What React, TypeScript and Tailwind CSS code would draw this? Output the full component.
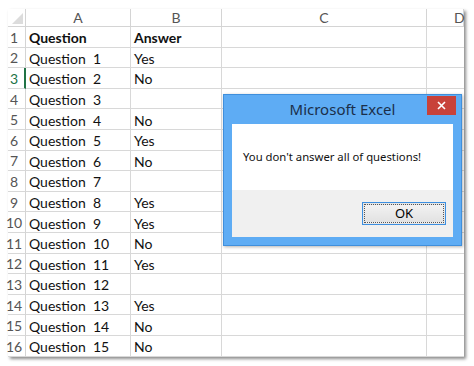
import React from 'react';

const rows: [string, string][] = [
	["Question", "Answer"],
	["Question  1", "Yes"],
	["Question  2", "No"],
	["Question  3", ""],
	["Question  4", "No"],
	["Question  5", "Yes"],
	["Question  6", "No"],
	["Question  7", ""],
	["Question  8", "Yes"],
	["Question  9", "Yes"],
	["Question  10", "No"],
	["Question  11", "Yes"],
	["Question  12", ""],
	["Question  13", "Yes"],
	["Question  14", "No"],
	["Question  15", "No"],
];

const cols = ["A", "B", "C", "D"];

const App: React.FC = () => {
	return (
		<div className="relative w-[474px] h-[366px] bg-white overflow-hidden font-['Lato',sans-serif]">
			<div className="ml-[8px] mt-[9px] w-[456px] bg-white shadow-[2px_2px_3px_rgba(0,0,0,0.45)]">
				<div className="grid grid-cols-[18px_105px_91px_205px_37px]">
					{/* header row */}
					<div className="relative h-[18px] border-r border-b border-[#d4d4d4]">
						<div className="absolute right-[2px] bottom-[2px] w-0 h-0 border-l-[11px] border-l-transparent border-b-[11px] border-b-[#dcdcdc]" />
					</div>
					{cols.map((c) => (
						<div key={c} className="h-[18px] flex items-center justify-center border-r border-b border-[#d4d4d4] text-[14px] text-[#555] whitespace-pre">
							{c === "D" ? "        D" : c}
						</div>
					))}

					{rows.map(([q, a], i) => (
						<React.Fragment key={i}>
							<div className={`h-[20.6px] flex items-center pt-[2px] border-b border-[#d8d8d8] ${i === 2 ? "border-r-2 border-r-[#217346]" : "border-r border-r-[#d4d4d4]"}`}>
								<span className={`w-[12px] flex justify-center text-[14px] leading-none ${i === 2 ? "text-[#217346]" : "text-[#555]"}`}>{i + 1}</span>
							</div>
							<div className={`h-[20.6px] flex items-center pt-[2px] pl-[3px] border-r border-b border-[#d8d8d8] text-[14px] text-[#111] whitespace-pre ${i === 0 ? "font-bold" : ""}`}>{q}</div>
							<div className={`h-[20.6px] flex items-center pt-[2px] pl-[3px] border-r border-b border-[#d8d8d8] text-[14px] text-[#111] ${i === 0 ? "font-bold" : ""}`}>{a}</div>
							<div className="h-[20.6px] border-r border-b border-[#d8d8d8]" />
							<div className="h-[20.6px] border-b border-[#d8d8d8]" />
						</React.Fragment>
					))}
				</div>
			</div>

			{/* message box */}
			<div className="absolute left-[223px] top-[94px] w-[239px] h-[152px] flex flex-col bg-[#5eacf4] border border-[#3f8fdc] shadow-[1px_1px_3px_rgba(0,0,0,0.3)] px-[8px] pb-[8px] font-['Noto_Sans',sans-serif]">
				<div className="relative h-[29px] flex items-center justify-center">
					<span className="text-[15px] text-[#1b2f4a]">Microsoft Excel</span>
					<div className="absolute right-[-3px] top-[1px] w-[29px] h-[19px] bg-[#c8423a] flex items-center justify-center">
						<svg width="9" height="9" viewBox="0 0 9 9">
							<path d="M1 1L8 8M8 1L1 8" stroke="white" strokeWidth="1.6" />
						</svg>
					</div>
				</div>
				<div className="flex-1 bg-white flex flex-col">
					<div className="h-[66px] flex items-center pl-[11px] text-[11.3px] text-[#111]">
						You don't answer all of questions!
					</div>
					<div className="flex-1 bg-[#f0f0f0] flex items-center justify-end pr-[7px]">
						<div className="w-[84px] h-[23px] border border-[#3c8fe0] p-[1px] bg-[#e6e6e6]">
							<div className="w-full h-full border border-dotted border-[#555] flex items-center justify-center text-[13px] text-black bg-gradient-to-b from-[#f2f2f2] to-[#e2e2e2]">
								OK
							</div>
						</div>
					</div>
				</div>
			</div>
		</div>
	);
};

export default App;
